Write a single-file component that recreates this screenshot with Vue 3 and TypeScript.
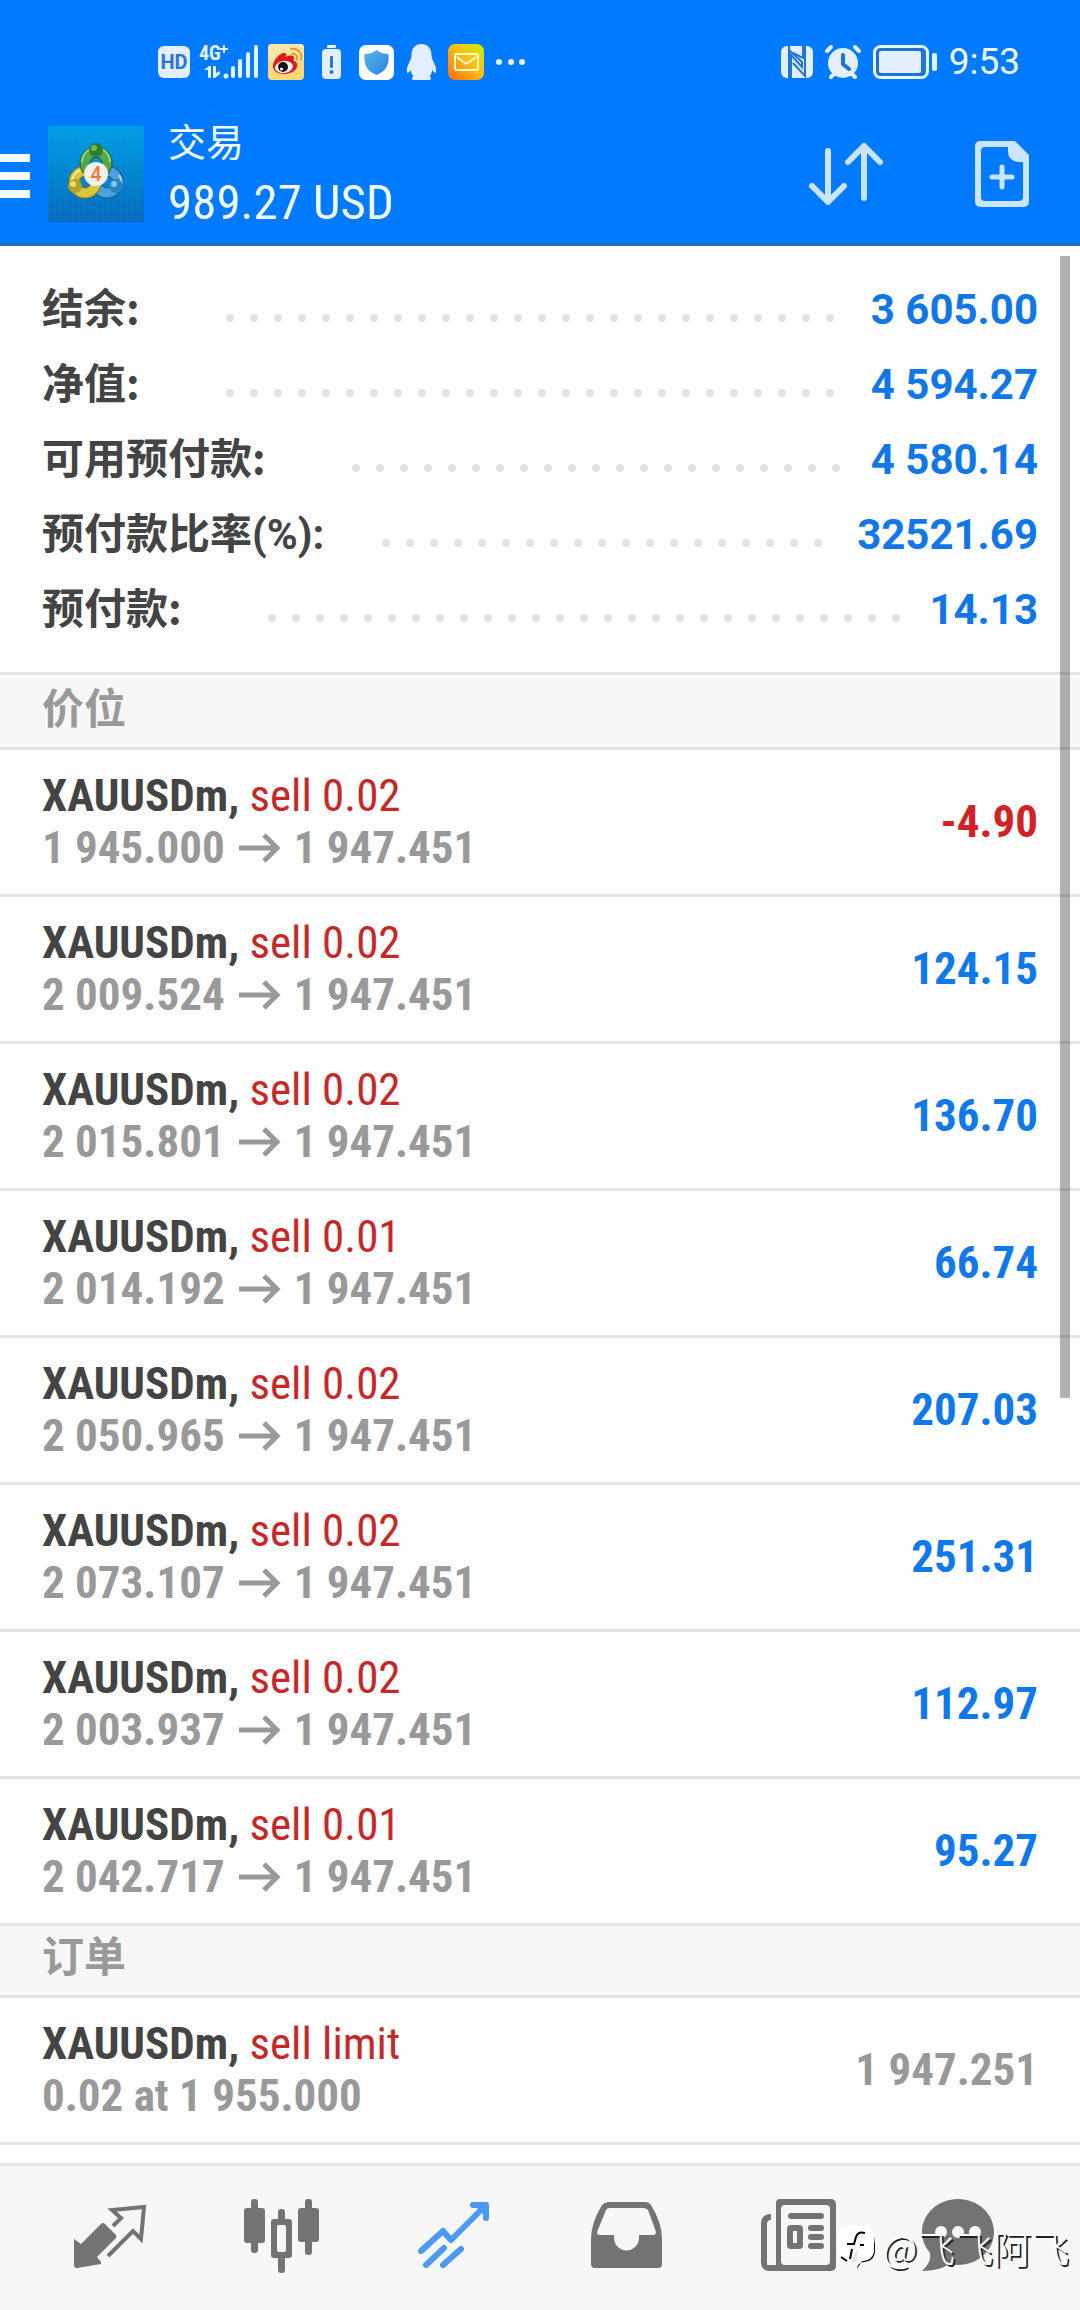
<script setup lang="ts">
interface SummaryRow {
  label: string
  value: string
  tight?: boolean
}

interface Position {
  symbol: string
  side: string
  open: string
  current: string
  profit: string
}

const summary: SummaryRow[] = [
  { label: '结余:', value: '3 605.00' },
  { label: '净值:', value: '4 594.27' },
  { label: '可用预付款:', value: '4 580.14' },
  { label: '预付款比率(%):', value: '32521.69', tight: true },
  { label: '预付款:', value: '14.13' },
]

const current = '1 947.451'
const symbol = 'XAUUSDm'

const positions: Position[] = [
  { symbol, side: 'sell 0.02', open: '1 945.000', current, profit: '-4.90' },
  { symbol, side: 'sell 0.02', open: '2 009.524', current, profit: '124.15' },
  { symbol, side: 'sell 0.02', open: '2 015.801', current, profit: '136.70' },
  { symbol, side: 'sell 0.01', open: '2 014.192', current, profit: '66.74' },
  { symbol, side: 'sell 0.02', open: '2 050.965', current, profit: '207.03' },
  { symbol, side: 'sell 0.02', open: '2 073.107', current, profit: '251.31' },
  { symbol, side: 'sell 0.02', open: '2 003.937', current, profit: '112.97' },
  { symbol, side: 'sell 0.01', open: '2 042.717', current, profit: '95.27' },
]

const orders = [{ symbol, side: 'sell limit', detail: '0.02 at 1 955.000', price: '1 947.251' }]
</script>

<template>
  <div class="app">
    <header class="top">
      <div class="status">
        <div class="status-left">
          <svg width="32" height="36" viewBox="0 0 32 36">
            <rect x="0" y="2" width="32" height="32" rx="6" fill="#e3eeff" />
            <text x="16" y="25" text-anchor="middle" class="hd">HD</text>
          </svg>
          <svg class="signal" width="60" height="36" viewBox="0 0 60 36" fill="#e3f4ff">
            <text x="0" y="16" class="net">4G</text>
            <path d="M21 4h3V1h2v3h3v2h-3v3h-2V6h-3z" />
            <path d="M5 26l5-4h2v12H9v-8zM14 22h3v7l4-2v3l-5 4h-2z" />
            <circle cx="27" cy="32" r="2.5" />
            <rect x="32" y="22" width="4" height="12" rx="2" />
            <rect x="39" y="15" width="4" height="19" rx="2" />
            <rect x="47" y="8" width="4" height="26" rx="2" />
            <rect x="55" y="1" width="4" height="33" rx="2" />
          </svg>
          <svg width="36" height="36" viewBox="0 0 36 36">
            <rect width="36" height="36" rx="4" fill="#fbd978" />
            <rect width="36" height="18" rx="4" fill="#fde6a4" />
            <path d="M5 22c0-6 7-13 11-13 2 0 3 1 2 4 4-2 8-2 8 1 0 1-1 2 0 3 3 1 4 3 3 6-2 5-8 7-13 7-6 0-11-3-11-8z" fill="#dd1a1f" />
            <ellipse cx="16" cy="23" rx="9" ry="6" fill="#fff" transform="rotate(-8 16 23)" />
            <circle cx="15" cy="23" r="5" fill="#111" />
            <circle cx="13.500" cy="25" r="1.500" fill="#fff" />
            <path d="M24 10c4-1 6 2 5 6M23 5c7-1 12 4 10 11" fill="none" stroke="#eb9a2d" stroke-width="2" stroke-linecap="round" />
          </svg>
          <svg width="36" height="36" viewBox="0 0 36 36">
            <rect x="14" y="1" width="9" height="3" rx="1" fill="#e3f4ff" />
            <rect x="9" y="5" width="19" height="30" rx="4" fill="#e3eeff" />
            <rect x="17" y="12" width="3" height="12" rx="1" fill="#2a74d6" />
            <circle cx="18.500" cy="28" r="2" fill="#2a74d6" />
          </svg>
          <svg width="36" height="36" viewBox="0 0 36 36">
            <defs>
              <linearGradient id="shield" x1="0" x2="1" y1="0" y2="1">
                <stop offset="0" stop-color="#5ab8e8" />
                <stop offset="1" stop-color="#2a80e0" />
              </linearGradient>
            </defs>
            <rect x="1" y="1" width="35" height="35" rx="7" fill="#fff" />
            <path d="M18.500 6c4 3 8 4 12 4 1 10-2 17-12 21C8.500 27 5.500 20 6.500 10c4 0 8-1 12-4z" fill="url(#shield)" />
          </svg>
          <svg width="36" height="36" viewBox="0 0 36 36" fill="#e3eeff">
            <path d="M18.500 0c6 0 10 4 10 11 0 3 1 5 3 9 2 4 2 8 1 9-1 0-2-1-3-3-1 3-1 4-3 6 2 1 2 4 0 4h-7c-1 0-1 0-2 0h-7c-2 0-2-3 0-4-2-2-2-3-3-6-1 2-2 3-3 3-1-1-1-5 1-9 2-4 3-6 3-9 0-7 4-11 10-11z" />
          </svg>
          <svg width="36" height="36" viewBox="0 0 36 36">
            <defs>
              <linearGradient id="mail" x1="1" x2="0" y1="0" y2="1">
                <stop offset="0" stop-color="#c8f00a" />
                <stop offset="0.450" stop-color="#fcc010" />
                <stop offset="1" stop-color="#ff6a10" />
              </linearGradient>
            </defs>
            <rect width="36" height="36" rx="7" fill="url(#mail)" />
            <rect x="7" y="10" width="23" height="16" rx="2" fill="none" stroke="#fffbd0" stroke-width="2" />
            <path d="M9 13l9 7 10-7" fill="none" stroke="#fffbd0" stroke-width="2" />
          </svg>
          <svg width="36" height="36" viewBox="0 0 36 36" fill="#e3f4ff">
            <circle cx="6" cy="18" r="3" />
            <circle cx="18" cy="18" r="3" />
            <circle cx="29" cy="18" r="3" />
          </svg>
        </div>
        <div class="status-right">
          <svg width="32" height="36" viewBox="0 0 32 36">
            <rect x="0" y="2" width="32" height="32" rx="6" fill="#e3eeff" />
            <path d="M8 2V13M10 34V11L21 23V18L8 6V34" fill="none" stroke="#1f74d8" stroke-width="2" />
            <path d="M22 2V14L12 9M12 19L24 32V2" fill="none" stroke="#1f74d8" stroke-width="2" />
          </svg>
          <svg width="36" height="36" viewBox="0 0 36 36">
            <circle cx="18" cy="19" r="15" fill="#e3eeff" />
            <path d="M2 7l4-4M34 7l-4-4M6 33l4-4M30 33l-4-4" stroke="#e3eeff" stroke-width="4" stroke-linecap="round" />
            <path d="M18 11v9l6 5" fill="none" stroke="#1f74d8" stroke-width="4" stroke-linecap="round" />
          </svg>
          <svg width="64" height="36" viewBox="0 0 64 36">
            <rect x="1.500" y="2.500" width="53" height="31" rx="6" fill="#1f74d8" stroke="#e3f7ff" stroke-width="3" />
            <rect x="6" y="7" width="42" height="22" rx="2" fill="#e3eeff" />
            <rect x="59" y="9" width="5" height="18" rx="2" fill="#e3f7ff" />
          </svg>
          <span class="time">9:53</span>
        </div>
      </div>
      <div class="toolbar">
        <button class="menu" aria-label="菜单">
          <svg width="30" height="48" viewBox="0 0 30 48" fill="#f2faff">
            <path d="M0 4h30v8H0zM0 22h30v8H0zM0 40h30v8H0z" />
          </svg>
        </button>
        <svg class="logo" width="96" height="96" viewBox="0 0 96 96">
          <defs>
            <linearGradient id="sky" x1="0" x2="0" y1="0" y2="1">
              <stop offset="0" stop-color="#009ee6" />
              <stop offset="0.500" stop-color="#0085d0" />
              <stop offset="1" stop-color="#0868be" />
            </linearGradient>
            <pattern id="mesh" width="6" height="6" patternUnits="userSpaceOnUse">
              <path d="M0 0H6M0 0V6" stroke="#35a9e2" stroke-width="1" opacity="0.200" />
            </pattern>
          </defs>
          <rect width="96" height="96" fill="url(#sky)" />
          <rect width="96" height="96" fill="url(#mesh)" />
          <g fill="none">
            <circle cx="59" cy="56" r="11" stroke="#14568f" stroke-width="11" />
            <circle cx="59" cy="56" r="11" stroke="#4aa3dc" stroke-width="9" />
            <circle cx="37" cy="56" r="11" stroke="#8a7a1c" stroke-width="11" />
            <circle cx="37" cy="56" r="11" stroke="#d9c63c" stroke-width="9" />
            <circle cx="48" cy="37" r="11" stroke="#22671f" stroke-width="11" />
            <circle cx="48" cy="37" r="11" stroke="#52a84a" stroke-width="9" />
            <path d="M34 36a14 14 0 0 1 28 0" stroke="#9bd48d" stroke-width="2" />
            <path d="M24 54a14 14 0 0 1 8-10" stroke="#f4ec9a" stroke-width="2" />
            <path d="M71 49a14 14 0 0 1 0 16" stroke="#b5dcf4" stroke-width="2" />
          </g>
          <circle cx="48" cy="24" r="7" fill="#2f7d2c" />
          <circle cx="46" cy="22" r="3" fill="#6db562" />
          <circle cx="27" cy="60" r="7" fill="#b79f25" />
          <circle cx="25" cy="58" r="3" fill="#eadf73" />
          <circle cx="68" cy="60" r="7" fill="#2d82c2" />
          <circle cx="66" cy="58" r="3" fill="#8cc7ec" />
          <circle cx="48" cy="48" r="12" fill="#f6f1ec" />
          <text x="48" y="55" text-anchor="middle" class="four">4</text>
        </svg>
        <div class="heading">
          <h1 class="title">交易</h1>
          <p class="total">989.27 USD</p>
        </div>
        <div class="actions">
          <button aria-label="排序">
            <svg width="76" height="66" viewBox="0 0 76 66" fill="none" stroke="#cce4ff" stroke-width="6" stroke-linecap="round" stroke-linejoin="round">
              <path d="M19 10V61M3 45L19 61L35 45M55 57V5M39 21L55 5L71 21" />
            </svg>
          </button>
          <button aria-label="新订单">
            <svg width="54" height="66" viewBox="0 0 54 66">
              <path fill="#cce4ff" fill-rule="evenodd" d="M5 0H40L54 14V61a5 5 0 0 1-5 5H5a5 5 0 0 1-5-5V5a5 5 0 0 1 5-5zM10 6a4 4 0 0 0-4 4V56a4 4 0 0 0 4 4H44a4 4 0 0 0 4-4V21H43a10 10 0 0 1-10-10V6z" />
              <path d="M27 26V46M17 36H37" stroke="#cce4ff" stroke-width="5" stroke-linecap="round" />
            </svg>
          </button>
        </div>
      </div>
    </header>

    <main class="content">
      <dl class="summary">
        <div v-for="row in summary" :key="row.label" class="summary-row" :class="{ tight: row.tight }">
          <dt>{{ row.label }}</dt>
          <span class="leader" aria-hidden="true"><i v-for="n in 60" :key="n"></i></span>
          <dd>{{ row.value }}</dd>
        </div>
      </dl>

      <h2 class="section section-first">价位</h2>
      <ul class="list">
        <li v-for="(p, i) in positions" :key="i" class="item">
          <div class="info">
            <p><b>{{ p.symbol }},</b> <span class="side">{{ p.side }}</span></p>
            <p class="detail">
              {{ p.open }}
              <svg class="arrow" width="43" height="30" viewBox="0 0 43 30" aria-label="→"><path d="M1 15H39M26 2L39 15L26 28" fill="none" stroke="#999" stroke-width="5" /></svg>
              {{ p.current }}
            </p>
          </div>
          <span class="amount" :class="{ loss: p.profit.startsWith('-') }">{{ p.profit }}</span>
        </li>
      </ul>

      <h2 class="section">订单</h2>
      <ul class="list">
        <li v-for="o in orders" :key="o.detail" class="item">
          <div class="info">
            <p><b>{{ o.symbol }},</b> <span class="side">{{ o.side }}</span></p>
            <p class="detail">{{ o.detail }}</p>
          </div>
          <span class="amount pending">{{ o.price }}</span>
        </li>
      </ul>
      <div class="scrollbar"></div>
    </main>

    <nav class="tabs">
      <button aria-label="行情">
        <svg viewBox="0 0 76 76">
          <path d="M2 41L9 46L29 26Q31 24 33 26L44 37Q45 39 44 40L25 59L29 64V66L5 70Q2 70 2 67z" />
          <path d="M41 28L49 20L40 12L72 9L69 41L61 33L36 58" fill="none" stroke="#737373" stroke-width="4" />
        </svg>
      </button>
      <button aria-label="图表">
        <svg viewBox="0 0 76 76">
          <rect x="7" y="1" width="7" height="54" rx="3" />
          <rect x="0" y="10" width="21" height="35" rx="3" />
          <rect x="34" y="11" width="7" height="14" rx="3" />
          <rect x="34" y="56" width="7" height="19" rx="3" />
          <path fill-rule="evenodd" d="M30 21H45a3 3 0 0 1 3 3V57a3 3 0 0 1-3 3H30a3 3 0 0 1-3-3V24a3 3 0 0 1 3-3zM35 27a2 2 0 0 0-2 2V52a2 2 0 0 0 2 2H40a2 2 0 0 0 2-2V29a2 2 0 0 0-2-2z" />
          <rect x="61" y="1" width="7" height="56" rx="3" />
          <rect x="54" y="10" width="21" height="34" rx="3" />
        </svg>
      </button>
      <button aria-label="交易" aria-current="page">
        <svg viewBox="0 0 76 76" fill="none" stroke="#489af2" stroke-width="6">
          <path d="M5 53L27 33L35 42L69 8" stroke-linejoin="round" />
          <path d="M57 7H70V20M63 8L69 14M10 67L28 50M27 67L45 51M5 53L12 47" stroke-linecap="round" stroke-linejoin="round" />
        </svg>
      </button>
      <button aria-label="历史">
        <svg viewBox="0 0 76 76">
          <path fill-rule="evenodd" d="M22 4H57Q61 4 63 7Q74 25 74 41V66a4 4 0 0 1-4 4H7a4 4 0 0 1-4-4V41Q3 25 14 7Q17 4 22 4zM22 10Q19 10 18 12L9 34Q9 37 12 37H26V40a12 12 0 0 0 25 0V37H65Q68 37 68 34L60 12Q58 10 55 10z" />
        </svg>
      </button>
      <button aria-label="新闻">
        <svg viewBox="0 0 76 76">
          <path fill-rule="evenodd" d="M20 1H71a5 5 0 0 1 5 5V68a5 5 0 0 1-5 5H9a8 8 0 0 1-8-8V26q0-10 10-10V22q-4 0-4 4V67H16V5a4 4 0 0 1 4-4zM25 7a4 4 0 0 0-4 4V63a4 4 0 0 0 4 4H66a4 4 0 0 0 4-4V11a4 4 0 0 0-4-4z" />
          <path d="M31 18H61M51 30H61M51 39H61M51 48H61" stroke="#737373" stroke-width="6" stroke-linecap="round" />
          <rect x="30" y="30" width="10" height="18" rx="1" fill="none" stroke="#737373" stroke-width="6" />
        </svg>
      </button>
      <button aria-label="聊天">
        <svg viewBox="0 0 76 76">
          <path fill-rule="evenodd" d="M38 1C58 1 74 16 74 34S58 67 38 67Q34 67 29 66Q20 73 2 73Q12 64 10 55Q2 46 2 34C2 16 18 1 38 1zM21 28a6 6 0 1 0 0.100 0zM38 28a6 6 0 1 0 0.100 0zM55 28a6 6 0 1 0 0.100 0z" />
        </svg>
      </button>
    </nav>

    <div class="watermark">
      <svg width="38" height="44" viewBox="0 0 38 44">
        <path d="M19 44Q19 38 26 37Q37 36 37 25V11L35 30L24 36z" fill="#000" />
        <path d="M13 1H24Q36 2 36 14V24Q36 35 25 36Q19 37 18 42Q17 40 18 36L13 36Q0 36 0 24V14Q0 1 13 1z" fill="#fff" />
        <path d="M20 23L13 37H18z" fill="#e4e4e4" />
        <path d="M27 8Q20 6 18 12L16 19H9M22 20H26M14 24L12 34M3 32L9 36" fill="none" stroke="#000" stroke-width="2" />
      </svg>
      <span>@飞飞阿飞</span>
    </div>
  </div>
</template>

<style>
body {
  margin: 0;
  background: #fefefe;
}
</style>

<style scoped>
.app {
  position: relative;
  display: flex;
  flex-direction: column;
  min-height: 100vh;
  background: #fefefe;
  color: #444;
  font-family: Roboto, 'Noto Sans CJK SC', sans-serif;
}
h1,
h2,
p,
dl,
dd,
ul {
  margin: 0;
  padding: 0;
  font-weight: 400;
}
svg {
  display: block;
  flex: none;
}
button {
  display: flex;
  align-items: center;
  justify-content: center;
  padding: 0;
  border: 0;
  background: none;
}
.top {
  background: #007aff;
  border-bottom: 3px solid #1a6bcc;
  color: #f2faff;
}
.status {
  display: flex;
  justify-content: space-between;
  padding: 44px 60px 25px 158px;
}
.status-left,
.status-right {
  display: flex;
  align-items: center;
  height: 36px;
}
.status-left {
  gap: 9px;
}
.status-right {
  gap: 12px;
}
.signal {
  overflow: visible;
}
.time {
  font-size: 37px;
  line-height: 40px;
}
.hd {
  font: 700 20px Roboto, sans-serif;
  fill: #2a74d6;
}
.net {
  font: 700 20px 'Roboto Condensed', Roboto, sans-serif;
}
.four {
  font: 500 20px Roboto, sans-serif;
  fill: #ec7a34;
}
.toolbar {
  display: flex;
  align-items: center;
  height: 138px;
}
.logo {
  margin-left: 18px;
}
.heading {
  flex: 1;
  margin-left: 24px;
  padding-bottom: 2px;
}
.title {
  font-size: 38px;
  line-height: 60px;
}
.total {
  font-family: 'Roboto Condensed', Roboto, sans-serif;
  font-size: 49px;
  line-height: 60px;
}
.actions {
  display: flex;
  gap: 90px;
  padding-right: 51px;
}
.content {
  position: relative;
  flex: 1;
}
.summary {
  padding: 26px 42px 25px;
  border-bottom: 3px solid #e4e4e4;
}
.summary-row {
  display: flex;
  align-items: baseline;
  height: 75px;
  font-size: 42px;
  line-height: 68px;
}
.summary-row dt {
  font-family: 'Noto Sans CJK SC', sans-serif;
  font-weight: 700;
}
.summary-row dd {
  font-weight: 700;
  color: #1177e8;
}
.leader {
  display: flex;
  flex: 1;
  flex-wrap: wrap;
  align-self: center;
  gap: 16px;
  height: 8px;
  margin: 16px 20px 0 86px;
  overflow: hidden;
}
.tight {
  line-height: 76px;
}
.tight dt {
  font-family: Roboto, 'Noto Sans CJK SC', sans-serif;
}
.tight .leader {
  margin-left: 58px;
}
.leader i {
  width: 8px;
  height: 8px;
  border-radius: 50%;
  background: #e2e2e2;
}
.section {
  height: 69px;
  padding-left: 42px;
  border-bottom: 3px solid #e4e4e4;
  background: #f7f7f7;
  color: #999;
  font-size: 42px;
  font-weight: 700;
  line-height: 64px;
}
.section-first {
  border-top: 3px solid #fefefe;
}
.list {
  list-style: none;
}
.item {
  display: flex;
  align-items: center;
  justify-content: space-between;
  height: 144px;
  padding: 0 42px;
  border-bottom: 3px solid #e4e4e4;
  font-family: 'Roboto Condensed', Roboto, sans-serif;
  font-size: 45px;
  line-height: 52px;
}
.item b {
  font-weight: 700;
}
.side {
  color: #c62828;
}
.detail {
  display: flex;
  align-items: center;
  gap: 13px;
  color: #999;
  font-weight: 700;
}
.amount {
  color: #0f78ea;
  font-weight: 700;
}
.loss {
  color: #d32226;
}
.pending {
  color: #999;
}
.scrollbar {
  position: absolute;
  top: 10px;
  right: 10px;
  width: 10px;
  height: 1142px;
  background: rgba(0, 0, 0, 0.3);
}
.tabs {
  display: grid;
  grid-template-columns: repeat(5, 172fr) 148fr;
  height: 140px;
  margin-top: 18px;
  padding: 0 48px 4px 24px;
  border-top: 3px solid #e4e4e4;
  background: #f7f7f7;
}
.tabs svg {
  width: 76px;
  height: 76px;
  fill: #737373;
}
.tabs svg[fill='none'] {
  fill: none;
}
.watermark {
  position: absolute;
  right: 11px;
  bottom: 38px;
  display: flex;
  align-items: center;
  gap: 6px;
  color: #fff;
  font-family: 'Noto Sans CJK SC', sans-serif;
  font-size: 38px;
  font-weight: 300;
  line-height: 50px;
  text-shadow: 2px 2px 0 #222;
}
</style>
